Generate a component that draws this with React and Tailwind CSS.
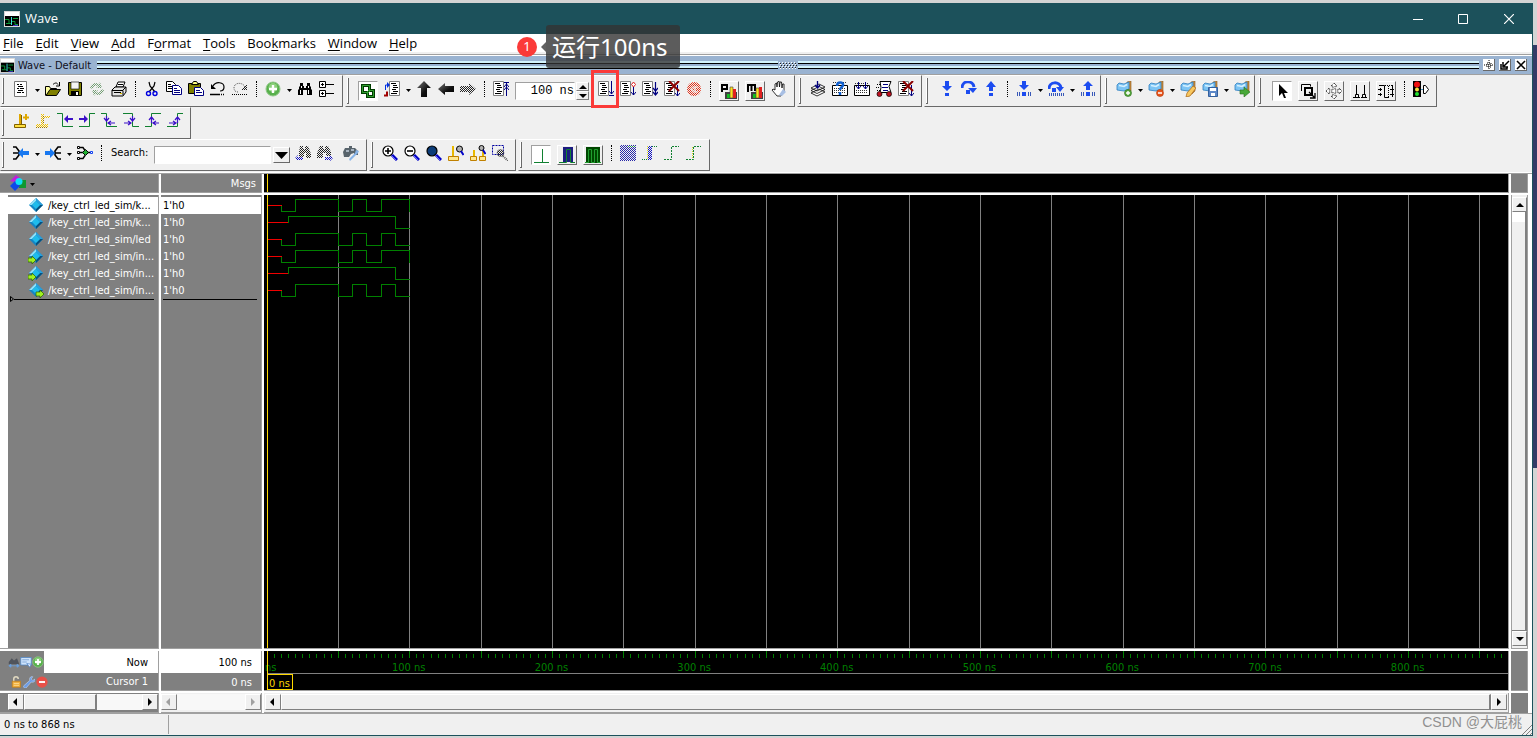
import { useState } from "react";
import clsx from "clsx";

const page = (
  <>
    <path d="M1.5 .5h12v15h-12z" fill="#fff" stroke="#777" />
    <path d="M4 3.5h2M7 3.5h2M5 5.5h5M4 7.5h2M7 7.5h4M5 9.5h5M4 11.5h4M9 11.5h2" stroke="#000" />
  </>
);

const doc = (
  <>
    <path d="M.5 .5h10v14H.5z" fill="#fff" stroke="#808080" />
    <path d="M2 2.5h5M4 4.5h4M4 6.5h5M3 8.5h4M4 10.5h5M2 12.5h6" stroke="#000" />
  </>
);

const lens = (fill) => (
  <>
    <circle cx="6" cy="6" r="5" fill={fill} stroke="#000" strokeWidth="1.2" />
    <path d="M10 10l5 5" stroke="#0000c8" strokeWidth="3" />
    <path d="M10 11l4 4" stroke="#6a6aff" />
  </>
);

const flag = (
  <>
    <path d="M11 1l4-1v10l-3 3h-2z" fill="#c98a3c" stroke="#8a5a20" strokeWidth=".6" />
    <path d="M1 4l2-2 5 1 5-2v7l-5 2-7-1z" fill="#7cc4f4" stroke="#2f7fc0" strokeWidth=".8" />
    <path d="M3 4.5l5 1 3-2" stroke="#d4f0ff" strokeWidth="1.6" fill="none" />
  </>
);

const diamond = (
  <>
    <path d="M8 1l7 7-7 7-7-7z" fill="#1585c4" />
    <path d="M8 1v3L4 8H1z" fill="#8fe0f7" />
    <path d="M8 1v3l4 4h3z" fill="#2aa0dc" />
    <path d="M15 8h-3l-4 4v3z" fill="#06517e" />
    <path d="M8 4l4 4-4 4-4-4z" fill="#1fbcec" />
  </>
);

const icons = {
  wave: (
    <>
      <path d="M0 0h16v16H0z" fill="#d8d8d8" />
      <path d="M1 1h14v4H1z" fill="#fff" />
      <path d="M1 5h14v10H1z" fill="#000" />
      <path d="M1 8.5h4v4h2M9 7.5h5M8 10.5h3v3h3M2 12.5h3" stroke="#0c9a3c" fill="none" />
      <path d="M7.5 6v8" stroke="#3ce0e0" />
      <path d="M9 14.5h5" stroke="#3a30c0" />
    </>
  ),
  page,
  open: (
    <>
      <path d="M.5 14.5v-9h4l1 2h6v2" fill="#ffffa0" stroke="#000" />
      <path d="M1 14.5l4-6h10.5l-4 6z" fill="#808000" stroke="#000" />
      <path d="M8 3.5c2-2 4-2 5 0M14.5 1v4H11" fill="none" stroke="#000" />
    </>
  ),
  save: (
    <>
      <path d="M1.5 1.5h13v13h-12l-1-1z" fill="#808000" stroke="#000" />
      <path d="M4 1h8v7H4z" fill="#f4f4f4" stroke="#000" strokeWidth=".6" />
      <path d="M4 10h8v4H4z" fill="#000" />
      <path d="M9 11h2v3H9z" fill="#fff" />
    </>
  ),
  reload: (
    <>
      <path d="M1 7c1-5 6-6 9-4l1-2 2 6H7l2-2C6 4 4 5 4 8z" fill="#709c70" />
      <path d="M15 9c-1 5-6 6-9 4l-1 2-2-6h6l-2 2c3 1 5 0 5-3z" fill="#709c70" />
      <path d="M0 0h16v16H0z" fill="url(#ditherBg)" />
    </>
  ),
  print: (
    <>
      <path d="M5 6l2-5h7l-2 5z" fill="#fff" stroke="#000" />
      <path d="M1 9l3-3h11v5l-3 4H1z" fill="#e4e4e4" stroke="#000" />
      <path d="M1 9.5h11V14M3 11.5h7M12 9l3-3M7 3.5h5" stroke="#000" fill="none" />
      <path d="M9 12h2v1H9z" fill="#e0c000" />
    </>
  ),
  cut: (
    <>
      <path d="M5 1l1 4 5 6M11 1l-1 4-5 6" stroke="#000" fill="none" strokeWidth="1.2" />
      <circle cx="4.5" cy="12.5" r="2" fill="none" stroke="#0000e0" strokeWidth="1.4" />
      <circle cx="11" cy="12.5" r="2" fill="none" stroke="#0000e0" strokeWidth="1.4" />
    </>
  ),
  copy: (
    <>
      <path d="M.5 .5h6l3 3v7h-9z" fill="#fff" stroke="#000" />
      <path d="M2 3.5h3M2 5.5h5M2 7.5h4" stroke="#000" />
      <path d="M6.5 4.5h6l3 3v6h-9z" fill="#fff" stroke="#000080" />
      <path d="M8 7.5h3M8 9.5h6M8 11.5h6" stroke="#000080" />
    </>
  ),
  paste: (
    <>
      <path d="M.5 2.5h12v10H.5z" fill="#808000" stroke="#000" />
      <path d="M3.5 3.5l2-3h3l2 3z" fill="#ffff80" stroke="#000" />
      <path d="M6.5 6.5h6l3 3v5h-9z" fill="#fff" stroke="#000080" />
      <path d="M8 9.5h4M8 11.5h6" stroke="#000080" />
    </>
  ),
  undo: (
    <>
      <path d="M3 5c3-5 11-4 11 1 0 3-2 4-4 4" fill="none" stroke="#000" strokeWidth="1.2" />
      <path d="M1 3v5h5z" fill="#000" />
      <path d="M0 13.5h10M11 13.5h1M13 13.5h1" stroke="#000" strokeWidth="1.5" />
    </>
  ),
  redo: (
    <>
      <path d="M13 6c-2-5-11-5-11 1 0 3 2 4 4 4" fill="none" stroke="#555" strokeDasharray="1 1" />
      <path d="M15 3v6H9z" fill="url(#ditherDark)" />
      <path d="M0 13.5h16" stroke="#000" strokeDasharray="1 1" />
    </>
  ),
  add: (
    <>
      <circle cx="8" cy="8" r="7" fill="#58b04c" stroke="#90c888" />
      <circle cx="8" cy="6.5" r="4.5" fill="#8cd07c" />
      <path d="M8 4v8M4 8h8" stroke="#fff" strokeWidth="2.4" />
    </>
  ),
  find: (
    <>
      <path d="M3 2h3v3h1v2h2V5h1V2h3v3l1 1v2l1 1v5h-5V9H6v5H1V9l1-1V6l1-1z" fill="#000" />
      <path d="M4.5 5v2M3.5 9v4M11.5 9v4M11.5 5v2" stroke="#fff" />
    </>
  ),
  tree: (
    <>
      <path d="M.5 .5h6v6h-6zM.5 9.5h6v6h-6z" fill="#fff" stroke="#000" />
      <path d="M7 3.5h8M7 12.5h8M2 3.5h3M2 12.5h3M3.5 2v3M3.5 11v3" stroke="#000" />
    </>
  ),
  link: (
    <>
      <path d="M2.5 2.5h7v7h-7zM7.5 7.5h6v6h-6z" fill="none" stroke="#003c00" strokeWidth="3" />
      <path d="M2.5 2.5h7v7h-7zM7.5 7.5h6v6h-6z" fill="none" stroke="#30a030" />
      <path d="M4 4h4v4H4zM9 9h3v3H9z" fill="#fff" />
    </>
  ),
  goto: (
    <>
      <g transform="translate(5 0)">{doc}</g>
      <path d="M0 14.5h3v-4" stroke="#a00000" strokeWidth="2" fill="none" />
      <path d="M1.5 9V4h3" stroke="#0030e0" fill="none" />
      <path d="M3 1l3 3-3 3z" fill="#0030e0" />
    </>
  ),
  up: <path d="M8 0l7 7h-4v9H5V7H1z" fill="url(#metal)" />,
  left: <path d="M0 8l7-6v3h9v6H7v3z" fill="url(#metal)" />,
  right: <path d="M16 8L9 2v3H0v6h9v3z" fill="url(#ditherDark)" />,
  restart: (
    <>
      {doc}
      <path d="M13.5 1v14M11 1.5h5M11 6l2.5-3L16 6M11 9l2.5-3L16 9" stroke="#000080" fill="none" />
    </>
  ),
  run: (
    <>
      {doc}
      <path d="M13.5 0v13M11 14.5h5M11 10l2.5 3 2.5-3" stroke="#000080" fill="none" />
    </>
  ),
  runCont: (
    <>
      {doc}
      <path d="M13.5 6v8M11 11l2.5 3 2.5-3" stroke="#000080" fill="none" />
      <path d="M13.5 1l2 2.5-2 2.5-2-2.5z" fill="#fff" stroke="#e02020" />
    </>
  ),
  runAll: (
    <>
      {doc}
      <path d="M13.5 1v13M11 7l2.5 3L16 7M11 11l2.5 3 2.5-3" stroke="#000080" fill="none" strokeWidth="1.2" />
    </>
  ),
  brk: (
    <>
      {doc}
      <path d="M13.5 4v11M11 12l2.5 3 2.5-3" stroke="#000080" fill="none" />
      <path d="M5 0l10 10M15 0L5 10" stroke="#8b0000" strokeWidth="2" />
    </>
  ),
  stop: (
    <>
      <circle cx="8" cy="8" r="7" fill="#e03018" />
      <path d="M12 6H7L5 8l2 3h5M9 6v5" stroke="#f0f0f0" fill="none" strokeWidth="1.2" />
      <path d="M0 0h16v16H0z" fill="url(#ditherBg)" />
    </>
  ),
  perf: (
    <>
      <path d="M1 9V2h5v4H1" fill="none" stroke="#000" strokeWidth="2" />
      <path d="M4 9h12v7H4z" fill="#404040" />
      <path d="M6 11h3v4H6z" fill="#10c020" />
      <path d="M9 4h3v11H9z" fill="#ffe020" stroke="#404040" strokeWidth=".6" />
      <path d="M12 6h3v9h-3z" fill="#e02020" />
    </>
  ),
  mem: (
    <>
      <path d="M1 9V2h7v6M4.5 2v6" fill="none" stroke="#000" strokeWidth="2" />
      <path d="M4 9h12v7H4z" fill="#404040" />
      <path d="M6 11h3v4H6z" fill="#10c020" />
      <path d="M9 5h3v10H9z" fill="#ffe020" stroke="#404040" strokeWidth=".6" />
      <path d="M12 4h3v11h-3z" fill="#e02020" />
    </>
  ),
  hand: (
    <>
      <path d="M4 9V3l1.5-1L6 6l.5-5L8 0l.5 6L9 1l1.5 0L11 7l.5-4L13 3v7l-3 5H6L1 9l1-1z" fill="#fff" stroke="#000" strokeWidth=".8" />
      <path d="M12 8l3 3-4 4-3-1z" fill="#a8bfe4" />
    </>
  ),
  compile: (
    <>
      <path d="M1 12l8-4 6 3-8 4zM1 9.5l8-4 6 3-8 4zM1 7l8-4 6 3-8 4z" fill="#fff" stroke="#000" strokeWidth=".8" />
      <path d="M7.5 0v6M5 4l2.5 3L10 4" stroke="#000080" strokeWidth="1.3" fill="none" />
    </>
  ),
  compileAsk: (
    <>
      <path d="M.5 4.5h15v10H.5z" fill="#fff" stroke="#000" />
      <path d="M1 1.5h14M2 7.5h12M2 9.5h12M2 11.5h12" stroke="#333" strokeDasharray="1 1" />
      <path d="M5 5c0-5 7-4 6-1 0 2-3 2-3 5M8 11v3" stroke="#1060d0" strokeWidth="2.5" fill="none" />
    </>
  ),
  compileAll: (
    <>
      <path d="M.5 4.5h15v10H.5z" fill="#fff" stroke="#000" />
      <path d="M1 2.5h14M2 9.5h12M2 11.5h12" stroke="#333" strokeDasharray="1 1" />
      <path d="M4.5 1v7M11.5 1v7M2 5l2.5 3L7 5M9 5l2.5 3L14 5" stroke="#000080" fill="none" />
    </>
  ),
  simulate: (
    <>
      <path d="M4 .5h11l-2 5 2 6H4l1-5z" fill="#fff" stroke="#000" />
      <path d="M1 3.5h3M0 6.5h4M1 9.5h3" stroke="#000" strokeDasharray="1 1" />
      <path d="M7 3.5h5M6 6.5h6M7 9.5h5" stroke="#000080" />
      <circle cx="3.5" cy="13" r="2.5" fill="#c01020" stroke="#000" strokeWidth=".7" />
      <circle cx="13" cy="13" r="2.5" fill="#c01020" stroke="#000" strokeWidth=".7" />
    </>
  ),
  stepIn: <path d="M6 0h4v5h3l-5 5-5-5h3zM6 12h4v3H6z" fill="#1c4cf0" />,
  stepOver: (
    <>
      <path d="M1 7c0-8 11-8 12-1" fill="none" stroke="#1c4cf0" strokeWidth="3" />
      <path d="M7 7h9l-4 5zM5 9h4v4H5z" fill="#1c4cf0" />
    </>
  ),
  stepOut: <path d="M8 0l5 6h-3v4H6V6H3zM6 12h4v3H6z" fill="#1c4cf0" />,
  stepInAll: (
    <>
      <path d="M6 0h4v4h3L8 9 3 4h3zM6 11h4v4H6z" fill="#1c4cf0" />
      <path d="M1.5 11v4M3.5 11v4M12.5 11v4M14.5 11v4" stroke="#3858b8" />
    </>
  ),
  stepOverAll: (
    <>
      <path d="M1 8c0-8 11-8 12-1" fill="none" stroke="#1c4cf0" strokeWidth="3" />
      <path d="M8 6h8l-4 5zM4 7h4v4H4z" fill="#1c4cf0" />
      <path d="M1 13.5h15" stroke="#3858b8" strokeWidth="3" strokeDasharray="1 1" />
    </>
  ),
  stepOutAll: (
    <>
      <path d="M8 0l5 5h-3v4H6V5H3zM6 11h4v4H6z" fill="#1c4cf0" />
      <path d="M1.5 11v4M3.5 11v4M12.5 11v4M14.5 11v4" stroke="#3858b8" />
    </>
  ),
  flagAdd: (
    <>
      {flag}
      <circle cx="12" cy="12" r="3.5" fill="#58a83c" stroke="#2a7020" strokeWidth=".6" />
      <path d="M12 10v4M10 12h4" stroke="#fff" strokeWidth="1.4" />
    </>
  ),
  flagDel: (
    <>
      {flag}
      <circle cx="12" cy="12" r="3.5" fill="#e8541c" stroke="#b03808" strokeWidth=".6" />
      <path d="M10 12h4" stroke="#fff" strokeWidth="1.5" />
    </>
  ),
  flagEdit: (
    <>
      {flag}
      <path d="M13 5l3 2-6 8-4 1 1-4z" fill="#f8c860" stroke="#b07020" strokeWidth=".8" />
    </>
  ),
  flagSave: (
    <>
      {flag}
      <path d="M6.5 6.5h9v9h-9z" fill="#5c88c8" stroke="#34609c" />
      <path d="M8 7h6v3H8zM9 12h4v3H9z" fill="#fff" />
    </>
  ),
  flagGo: (
    <>
      {flag}
      <path d="M6 9h4V6l6 5-6 5v-3H6z" fill="#48a838" stroke="#2a7020" strokeWidth=".6" />
    </>
  ),
  cursor: <path d="M5 1v12l3-3 2 5h2l-2-5h4z" fill="#000" />,
  zoomBox: (
    <>
      <path d="M1.5 8V1.5h9v2" stroke="#000" fill="none" />
      <path d="M5 5h7v7H5z" fill="none" stroke="#000" strokeWidth="2" />
      <path d="M9 9l6 6M15 10v5h-5" stroke="#000" fill="none" strokeWidth="1.3" />
    </>
  ),
  pan: <path d="M8 0l3 3H9v4h4V5l3 3-3 3V9H9v4h2l-3 3-3-3h2V9H3v2L0 8l3-3v2h4V3H5z" fill="#fff" stroke="#000" strokeDasharray="1 1" />,
  cursors: <path d="M4.5 2v9M3.5 11.5h3v3h-3zM1 14.5h7M12.5 2v9M10.5 11.5h3v3h-3zM9 14.5h6" stroke="#000" fill="none" />,
  edit: (
    <>
      <path d="M1 2.5h5.5v12H11M14.5 2v12" stroke="#000" fill="none" />
      <path d="M7 2.5h8M10.5 3v11" stroke="#000" strokeDasharray="1 1" />
      <path d="M0 6.5h4M2.5 5v3M0 11.5h4M2.5 10v3M12 6.5h4M12 11.5h4" stroke="#000" />
    </>
  ),
  light: (
    <>
      <path d="M0 0h8v16H0z" fill="#000" />
      <circle cx="4" cy="3.5" r="3" fill="#f01010" />
      <circle cx="4" cy="8.5" r="2" fill="#f8e040" />
      <circle cx="4" cy="13" r="2" fill="#20e030" />
      <path d="M10.5 4.5h2l3 4-3 4h-2z" fill="#fff" stroke="#000" />
      <path d="M8 8.5h2" stroke="#4090c0" />
    </>
  ),
  cursorAdd: (
    <>
      <path d="M1.5 11.5h11v3h-11z" fill="#ffe040" stroke="#806000" />
      <path d="M7 1v10M10 4.5h6M13 1v6" stroke="#e0a800" strokeWidth="2" />
      <path d="M8.5 2v9" stroke="#806000" />
    </>
  ),
  cursorDel: (
    <>
      <path d="M1 11h12v4H1zM6 1h3v10H6zM9 3h6v2H9z" fill="#f0c000" />
      <path d="M1 14.5h12M8.5 2v9" stroke="#a07800" />
      <path d="M0 0h16v16H0z" fill="url(#ditherBg)" />
    </>
  ),
  prevEdge: (
    <>
      <path d="M0 .5h5.5v13H16" stroke="#108030" fill="none" />
      <path d="M8 6h8" stroke="#3c10c8" strokeWidth="2" />
      <path d="M11 2v8L7 6z" fill="#3c10c8" />
    </>
  ),
  nextEdge: (
    <>
      <path d="M0 13.5h10.5V.5H16" stroke="#108030" fill="none" />
      <path d="M0 6h8" stroke="#3c10c8" strokeWidth="2" />
      <path d="M5 2v8l4-4z" fill="#3c10c8" />
    </>
  ),
  prevFall: (
    <>
      <path d="M0 .5h5.5v13H16" stroke="#108030" fill="none" />
      <path d="M5.5 3v6M3 5l2.5 3L8 5M7 10h7M10 8l-3 2 3 2" stroke="#3c10c8" fill="none" strokeWidth="1.2" />
    </>
  ),
  nextFall: (
    <>
      <path d="M0 .5h9.5v13H16" stroke="#108030" fill="none" />
      <path d="M9.5 3v6M7 5l2.5 3L12 5M1 10h7M5 8l3 2-3 2" stroke="#3c10c8" fill="none" strokeWidth="1.2" />
    </>
  ),
  prevRise: (
    <>
      <path d="M0 13.5h6.5V.5H16" stroke="#108030" fill="none" />
      <path d="M6.5 4v6M4 7l2.5-3L9 7M8 10h6M11 8l-3 2 3 2" stroke="#3c10c8" fill="none" strokeWidth="1.2" />
    </>
  ),
  nextRise: (
    <>
      <path d="M0 13.5h10.5V.5H16" stroke="#108030" fill="none" />
      <path d="M10.5 4v6M8 7l2.5-3L13 7M2 10h7M6 8l3 2-3 2" stroke="#3c10c8" fill="none" strokeWidth="1.2" />
    </>
  ),
  driver: (
    <>
      <path d="M0 2h3l3 4v4l-3 4H0M0 8h8" stroke="#000" strokeWidth="1.6" fill="none" />
      <path d="M5 8l5-5v3h6v4h-6v3z" fill="#1878f0" />
    </>
  ),
  reader: (
    <>
      <path d="M16 2h-3l-3 4v4l3 4h3M10 8h6" stroke="#000" strokeWidth="1.6" fill="none" />
      <path d="M10 8L5 3v3H0v4h5v3z" fill="#1878f0" />
    </>
  ),
  trace: (
    <>
      <path d="M3 2.5h3l2 3M3 7.5h10M3 13.5h3l2-3" stroke="#000" fill="none" strokeWidth="1.4" />
      <path d="M.5 1.5h2v2h-2zM.5 6.5h2v2h-2zM.5 12.5h2v2h-2z" fill="#fff" stroke="#000" />
      <path d="M8.5 4.5l3 3-3 3-3-3z" fill="#20b030" stroke="#000" />
      <path d="M13.5 6.5h2v2h-2z" fill="#fff" stroke="#1040f0" />
    </>
  ),
  searchPrev: (
    <>
      <path d="M5 1h3v3h2V1h3l3 8v4h-5V8H9v4H4V7z" fill="url(#ditherDark)" />
      <path d="M0 13l3-3v2h5v3H3v1z" fill="url(#ditherBlue)" />
    </>
  ),
  searchNext: (
    <>
      <path d="M3 1h3v3h2V1h3l3 6v4H9V8H6v5H0V8z" fill="url(#ditherDark)" />
      <path d="M16 13l-3-3v2H8v3h5v1z" fill="url(#ditherBlue)" />
    </>
  ),
  searchOpt: (
    <>
      <path d="M2 3h4V1h3v2h3l3 3v4h-4V8l-3 1-2 3H1L0 7z" fill="#58646c" />
      <path d="M3 6h3M8 5h3" stroke="#a8b4c0" strokeWidth="2" />
      <path d="M6 14l6-6 1-3 3 1-1 2-2 2-6 6z" fill="#88b4e8" />
    </>
  ),
  zoomIn: (
    <>
      {lens("#fff")}
      <path d="M6 3v6M3 6h6" stroke="#000" strokeWidth="1.6" />
    </>
  ),
  zoomOut: (
    <>
      {lens("#fff")}
      <path d="M3 6h6" stroke="#000" strokeWidth="1.6" />
    </>
  ),
  zoomFull: lens("#0c3c78"),
  zoomCursor: (
    <>
      <path d="M.5 11.5h10v4H.5z" fill="#ffe890" stroke="#c08000" />
      <path d="M5 1v10" stroke="#e8b800" strokeWidth="2" />
      <circle cx="11.5" cy="4" r="3" fill="#b0b0b0" stroke="#000" />
      <path d="M13 6l2.5 4" stroke="#0000c8" strokeWidth="2" />
    </>
  ),
  zoomCursors: (
    <>
      <path d="M.5 11.5h6v4h-6zM9.5 11.5h6v4h-6z" fill="#ffe890" stroke="#c08000" />
      <path d="M4 5v6M13 5v6" stroke="#e8b800" strokeWidth="2" />
      <circle cx="11.5" cy="3" r="2.5" fill="#b0b0b0" stroke="#000" />
      <path d="M13 5l2.5 4" stroke="#0000c8" strokeWidth="2" />
    </>
  ),
  zoomArea: (
    <>
      <path d="M.5 .5h11v9H.5z" fill="none" stroke="#0000a0" strokeDasharray="2 1" />
      <circle cx="8.5" cy="8" r="3.5" fill="url(#ditherDark)" stroke="#666" strokeWidth=".6" />
      <path d="M11 11l5 5" stroke="#555" strokeWidth="2" strokeDasharray="1 1" />
    </>
  ),
  lineMode: <path d="M1 15.5h15M9.5 2v13" stroke="#108030" />,
  barMode: (
    <>
      <path d="M4 0h10v15H4z" fill="#1c1c80" />
      <path d="M0 15.5h7.5v-13h4v13H16" fill="none" stroke="#108030" />
    </>
  ),
  fillMode: (
    <>
      <path d="M1 0h14v16H1z" fill="#004800" />
      <path d="M0 15.5h3.5v-13h3v13h3v-13h3v13H16" fill="none" stroke="#20a030" />
    </>
  ),
  expand1: (
    <>
      <path d="M0 0h16v16H0z" fill="#2828a8" />
      <path d="M0 0h16v16H0z" fill="url(#ditherBg)" />
      <path d="M8 1.5h8" stroke="#20a030" strokeDasharray="1 1" />
    </>
  ),
  expand2: (
    <>
      <path d="M0 14.5h5M10 1.5h6" stroke="#108030" strokeDasharray="1 1" />
      <path d="M5 1h5v14H5z" fill="url(#ditherBlue)" />
      <path d="M5.5 1v14" stroke="#d8d820" strokeDasharray="1 1" />
    </>
  ),
  expand3: <path d="M0 14.5h7.5V1.5H15" fill="none" stroke="#108030" strokeDasharray="2 1" />,
  expand4: (
    <>
      <path d="M0 14.5h7.5V1.5H15" fill="none" stroke="#108030" strokeDasharray="2 1" />
      <path d="M6.5 2v12" stroke="#d8d820" strokeDasharray="1 1" />
    </>
  ),
  colors: (
    <>
      <path d="M6 0l5 4-7 3-4-1z" fill="#c020d8" />
      <path d="M9 5h7v8H9z" fill="#109830" />
      <path d="M5 6l5 5-5 5-5-5z" fill="#1048e8" />
      <circle cx="9" cy="6.5" r="3.5" fill="#10e0f8" />
    </>
  ),
  sig: diamond,
  sigIn: (
    <>
      {diamond}
      <path d="M0 10h4V8l4 4-4 4v-2H0z" fill="#a0f020" stroke="#286000" strokeWidth=".7" />
    </>
  ),
  sigOut: (
    <>
      {diamond}
      <path d="M8 10h4V8l4 4-4 4v-2H8z" fill="#a0f020" stroke="#286000" strokeWidth=".7" />
    </>
  ),
  snap: (
    <>
      <path d="M1 11V8l4-5 3 3 4-3 3 8z" fill="#50545c" />
      <path d="M1 13l3-2v4zM15 13l-3-2v4zM3 13h10" fill="#6aa0e0" stroke="#6aa0e0" />
    </>
  ),
  note: (
    <>
      <path d="M1 2h14v10H1z" fill="#cfe4fb" stroke="#4f86c8" />
      <path d="M3 5h9M3 8h6" stroke="#6c98d0" />
      <path d="M9 10l4 5 2-4z" fill="#e8f0ff" stroke="#4f86c8" />
    </>
  ),
  lock: (
    <>
      <path d="M5 8V4c0-4 6-4 6 0" fill="none" stroke="#e0d8c0" strokeWidth="2" />
      <path d="M3 7h11v8H3z" fill="#f0b040" stroke="#c07c18" />
      <path d="M5 10h7M5 12.5h7" stroke="#ffe09c" />
    </>
  ),
  wrench: <path d="M1 13l8-7c-1-4 2-6 4-5l-2 3 2 2 3-2c1 3-2 5-5 4l-7 8c-2 1-4-1-3-3z" fill="#6c9ce4" stroke="#d0e0f8" strokeWidth=".7" />,
  remove: (
    <>
      <circle cx="8" cy="8" r="7.5" fill="#e85048" />
      <path d="M4 8h8" stroke="#fff" strokeWidth="2.5" />
    </>
  ),
};

const signals = [
  { name: "/key_ctrl_led_sim/k...", icon: "sig", shape: "full" },
  { name: "/key_ctrl_led_sim/k...", icon: "sig", shape: "slow" },
  { name: "/key_ctrl_led_sim/led", icon: "sig", shape: "drop" },
  { name: "/key_ctrl_led_sim/in...", icon: "sigIn", shape: "full" },
  { name: "/key_ctrl_led_sim/in...", icon: "sigIn", shape: "slow" },
  { name: "/key_ctrl_led_sim/in...", icon: "sigOut", shape: "drop" },
];

// x is measured from the 0 ns cursor, y from the top of the signal's row
const shapes = {
  full: { red: 14, d: "M14 6v6h14V0h43v12h14V0h14v12h15V0h28v12" },
  drop: { red: 14, d: "M14 6v6h14V0h43v12h14V0h14v12h15V0h14v12h14" },
  slow: { red: 21, d: "M21 6V0h107v12h14" },
};

const PX_PER_50NS = 71.35;

const menus = [
  ["", "F", "ile"],
  ["", "E", "dit"],
  ["", "V", "iew"],
  ["", "A", "dd"],
  ["F", "o", "rmat"],
  ["", "T", "ools"],
  ["Boo", "k", "marks"],
  ["", "W", "indow"],
  ["", "H", "elp"],
];

function Icon({ name, size = "size-4" }) {
  return (
    <svg viewBox="0 0 16 16" className={clsx("shrink-0", size)} aria-hidden="true">
      {icons[name]}
    </svg>
  );
}

function Tool({ icon, label, children }) {
  return (
    <button type="button" aria-label={label || icon} className="relative flex h-6 w-[22px] shrink-0 items-center justify-center">
      <Icon name={icon} />
      {children}
    </button>
  );
}

function Raised({ icon, on }) {
  return (
    <button
      type="button"
      aria-label={icon}
      aria-pressed={!!on}
      className={clsx(
        "mx-[3px] mt-1 flex size-5 shrink-0 items-center justify-center border",
        on
          ? "border-t-[#a0a0a0] border-l-[#a0a0a0] border-r-white border-b-white bg-white"
          : "border-t-white border-l-white border-r-[#696969] border-b-[#696969] bg-[#f0f0f0]"
      )}
    >
      <Icon name={icon} />
    </button>
  );
}

function More() {
  return (
    <button type="button" aria-label="More" className="flex h-6 w-[10px] shrink-0 items-center justify-center pt-[3px]">
      <svg viewBox="0 0 5 3" className="h-[3px] w-[5px]"><path d="M0 0h5L2.5 3z" /></svg>
    </button>
  );
}

function Sep() {
  return (
    <div className="flex w-[11px] shrink-0 justify-center">
      <div className="h-4 border-l border-dotted border-black" />
    </div>
  );
}

function Group({ children, className }) {
  return (
    <div className={clsx("flex h-8 shrink-0 items-center border border-t-white border-l-transparent border-r-[#696969] border-b-[#696969] pb-1", className)}>
      <div className="mt-[3px] ml-px h-[26px] w-[2px] shrink-0 border-r border-b border-[#696969] bg-white" />
      {children}
    </div>
  );
}

function Tri({ dir, off }) {
  const d = { left: "M5 0v8L1 4z", right: "M2 0v8l4-4z", up: "M0 6h8L4 2z", down: "M0 2h8L4 6z" }[dir];
  return (
    <svg viewBox="0 0 8 8" className="size-2"><path d={d} fill={off ? "#a0a0a0" : "#000"} /></svg>
  );
}

function Arrow({ dir, off, className }) {
  return (
    <button
      type="button"
      aria-label={"Scroll " + dir}
      disabled={off}
      className={clsx("flex shrink-0 items-center justify-center border border-t-white border-l-white border-r-[#808080] border-b-[#808080] bg-[#f0f0f0]", className)}
    >
      <Tri dir={dir} off={off} />
    </button>
  );
}

function HScroll({ off, thumb }) {
  return (
    <div className="mt-px flex h-4 w-full items-stretch bg-[#f8f8f8]">
      <Arrow dir="left" off={off} className="w-4" />
      {thumb && <div className={clsx("border border-r-2 border-t-white border-l-white border-r-[#808080] border-b-[#808080] bg-[#f0f0f0]", thumb)} />}
      {thumb !== "flex-1" && <div className="flex-1" />}
      <Arrow dir="right" off={off} className="w-4" />
    </div>
  );
}

function Defs() {
  return (
    <svg className="absolute size-0" aria-hidden="true">
      <defs>
        <pattern id="ditherBg" width="2" height="2" patternUnits="userSpaceOnUse">
          <path d="M0 0h1v1H0zM1 1h1v1H1z" fill="#f0f0f0" />
        </pattern>
        <pattern id="ditherDark" width="2" height="2" patternUnits="userSpaceOnUse">
          <path d="M0 0h1v1H0zM1 1h1v1H1z" fill="#222" />
        </pattern>
        <pattern id="ditherBlue" width="2" height="2" patternUnits="userSpaceOnUse">
          <path d="M0 0h1v1H0zM1 1h1v1H1z" fill="#1010c0" />
        </pattern>
        <linearGradient id="metal" x1="0" y1="0" x2="1" y2="1">
          <stop offset="0" stopColor="#777" />
          <stop offset=".6" stopColor="#111" />
          <stop offset="1" stopColor="#000" />
        </linearGradient>
      </defs>
    </svg>
  );
}

function TitleBar() {
  return (
    <div className="flex h-[31px] shrink-0 items-center bg-[#1c515b] pl-1 text-white">
      <Icon name="wave" />
      <span className="ml-[5px] flex-1 font-['Open_Sans',sans-serif] text-[13px]">Wave</span>
      <button type="button" aria-label="Minimize" className="flex w-[45px] justify-center">
        <svg viewBox="0 0 10 10" className="size-[10px]"><path d="M0 5.5h10" stroke="#fff" /></svg>
      </button>
      <button type="button" aria-label="Maximize" className="flex w-[45px] justify-center">
        <svg viewBox="0 0 10 10" className="size-[10px]"><path d="M.5 .5h9v9h-9z" stroke="#fff" fill="none" /></svg>
      </button>
      <button type="button" aria-label="Close" className="flex w-[47px] justify-center">
        <svg viewBox="0 0 10 10" className="size-[10px]"><path d="M0 0l10 10M10 0L0 10" stroke="#fff" strokeWidth="1.2" /></svg>
      </button>
    </div>
  );
}

function Rails() {
  return (
    <div className="flex flex-1 flex-col gap-[2px]">
      <div className="h-[3px] border-t-2 border-b border-t-[#d4f4fc] border-b-black" />
      <div className="h-[3px] border-t-2 border-b border-t-[#d4f4fc] border-b-black" />
    </div>
  );
}

function DockHeader() {
  const btn = "flex size-3 items-center justify-center border-r border-b border-[#696969] bg-white";
  return (
    <div className="flex h-5 shrink-0 items-center border-y border-t-white border-b-[#a0a0a0] bg-[#9ab3d1] pr-[5px]">
      <Icon name="wave" size="size-[15px]" />
      <span className="mr-[6px] ml-[3px] pt-[2px] text-[#101020]">Wave - Default</span>
      <Rails />
      <svg viewBox="0 0 18 8" className="mx-px h-2 w-[18px]">
        <path d="M0 1.5h18M1 3.5h17M0 5.5h18M1 7.5h17" stroke="#fff" strokeDasharray="1 2" />
        <path d="M1 2.5h17M2 4.5h16M1 6.5h17" stroke="#222" strokeDasharray="1 2" />
      </svg>
      <Rails />
      <div className="ml-1 flex gap-1">
        <button type="button" aria-label="Undock" className={btn}>
          <svg viewBox="0 0 10 10" className="size-[10px]"><path d="M5 0v10M0 5h10M3 3h4v4H3z" stroke="#000" strokeDasharray="1 1" fill="none" /></svg>
        </button>
        <button type="button" aria-label="Dock" className={btn}>
          <svg viewBox="0 0 10 10" className="size-[10px]"><path d="M9 1L4 6M3 2v5h5M1 4v5h6V7" stroke="#000" strokeWidth="1.5" fill="none" /></svg>
        </button>
        <button type="button" aria-label="Close pane" className={btn}>
          <svg viewBox="0 0 10 10" className="size-[10px]"><path d="M1 1l8 8M9 1L1 9" stroke="#000" strokeWidth="1.6" /></svg>
        </button>
      </div>
    </div>
  );
}

function Toolbars() {
  const [span, setSpan] = useState("100 ns");
  const [query, setQuery] = useState("");
  return (
    <div className="shrink-0 border-b border-white bg-[#f0f0f0] pb-px">
      <div className="flex gap-[2px]">
        <Group className="pr-1">
          <div className="w-[6px]" />
          <Tool icon="page" /><More /><Tool icon="open" /><Tool icon="save" /><Tool icon="reload" /><Tool icon="print" /><Sep />
          <Tool icon="cut" /><Tool icon="copy" /><Tool icon="paste" /><Tool icon="undo" /><Tool icon="redo" /><Sep />
          <Tool icon="add" /><More /><Tool icon="find" /><Tool icon="tree" />
        </Group>
        <Group className="pr-1">
          <div className="w-[6px]" />
          <Raised icon="link" on /><Tool icon="goto" /><More /><Tool icon="up" /><Tool icon="left" /><Tool icon="right" /><Sep />
          <Tool icon="restart" />
          <input
            aria-label="Run length"
            value={span}
            onChange={(e) => setSpan(e.target.value)}
            className="mt-1 ml-[3px] h-[18px] w-[60px] border border-t-[#a0a0a0] border-l-[#a0a0a0] border-r-white border-b-white bg-white text-right font-['Liberation_Mono',monospace] text-[12px]"
          />
          <div className="mt-1 mr-[6px] ml-px flex flex-col">
            <Arrow dir="up" className="h-[9px] w-[13px]" />
            <Arrow dir="down" className="h-[9px] w-[13px]" />
          </div>
          <Tool icon="run" label="Run">
            <span className="absolute -top-[7px] -left-1 z-10 h-[38px] w-7 border-[3px] border-[#fb3a38]" />
          </Tool>
          <Tool icon="runCont" /><Tool icon="runAll" /><Tool icon="brk" /><Tool icon="stop" /><Sep />
          <Raised icon="perf" /><Raised icon="mem" /><Tool icon="hand" />
        </Group>
        <Group className="pr-1">
          <div className="w-[6px]" />
          <Tool icon="compile" /><Tool icon="compileAsk" /><Tool icon="compileAll" /><Tool icon="simulate" /><Tool icon="brk" />
        </Group>
        <Group className="pr-px">
          <div className="w-[8px]" />
          <Tool icon="stepIn" /><Tool icon="stepOver" /><Tool icon="stepOut" /><Sep />
          <Tool icon="stepInAll" /><More /><Tool icon="stepOverAll" /><More /><Tool icon="stepOutAll" />
        </Group>
        <Group className="pr-px">
          <div className="w-[6px]" />
          <Tool icon="flagAdd" /><More /><Tool icon="flagDel" /><More /><Tool icon="flagEdit" /><Tool icon="flagSave" /><More /><Tool icon="flagGo" />
        </Group>
        <Group className="pr-1">
          <div className="w-[8px]" />
          <Raised icon="cursor" on /><Raised icon="zoomBox" /><Raised icon="pan" /><Raised icon="cursors" /><Raised icon="edit" /><Sep />
          <Tool icon="light" />
        </Group>
      </div>
      <div className="flex gap-[2px]">
        <Group className="pr-1">
          <div className="w-[6px]" />
          <Tool icon="cursorAdd" /><Tool icon="cursorDel" /><Tool icon="prevEdge" /><Tool icon="nextEdge" />
          <Tool icon="prevFall" /><Tool icon="nextFall" /><Tool icon="prevRise" /><Tool icon="nextRise" />
        </Group>
      </div>
      <div className="flex gap-[2px]">
        <Group className="pr-1">
          <div className="w-[6px]" />
          <Tool icon="driver" /><More /><Tool icon="reader" /><More /><Tool icon="trace" /><Sep />
          <label htmlFor="search" className="mr-[6px] ml-1 pt-px">Search:</label>
          <input
            id="search"
            value={query}
            onChange={(e) => setQuery(e.target.value)}
            className="mt-1 h-[18px] w-[117px] border border-t-[#a0a0a0] border-l-[#a0a0a0] border-r-white border-b-white bg-white px-1"
          />
          <button type="button" aria-label="Search history" className="mx-[2px] mt-1 flex h-4 w-[17px] items-center justify-center border border-t-white border-l-white border-r-[#696969] border-b-[#696969]">
            <svg viewBox="0 0 13 7" className="h-[7px] w-[13px]"><path d="M0 0h13L6.5 7z" /></svg>
          </button>
          <Tool icon="searchPrev" /><Tool icon="searchNext" />
          <div className="w-1" />
          <Tool icon="searchOpt" />
        </Group>
        <Group className="pr-1">
          <div className="w-[6px]" />
          <Tool icon="zoomIn" /><Tool icon="zoomOut" /><Tool icon="zoomFull" /><Tool icon="zoomCursor" /><Tool icon="zoomCursors" /><Tool icon="zoomArea" />
        </Group>
        <Group className="pr-1">
          <div className="w-[6px]" />
          <Raised icon="lineMode" on /><Raised icon="barMode" /><Raised icon="fillMode" /><Sep />
          <Tool icon="expand1" /><Tool icon="expand2" /><Tool icon="expand3" /><Tool icon="expand4" />
        </Group>
      </div>
    </div>
  );
}

function Plot() {
  return (
    <svg className="absolute inset-0 size-full" shapeRendering="crispEdges">
      {Array.from({ length: 60 }, (_, i) => (
        <path key={i} d={`M${Math.floor(3 + (i + 1) * PX_PER_50NS) + 0.5} 0v2000`} stroke="#808080" />
      ))}
      {signals.map((s, i) => (
        <g key={i} transform={`translate(3.5 ${i * 17 + 4.5})`} fill="none">
          <path d={`M0 6h${shapes[s.shape].red}`} stroke="#f00000" />
          <path d={shapes[s.shape].d} stroke="#008000" />
        </g>
      ))}
      <path d="M3.5 0v2000" stroke="#ffd800" />
    </svg>
  );
}

function Ruler() {
  return (
    <svg className="absolute inset-0 size-full" shapeRendering="crispEdges">
      {Array.from({ length: 173 }, (_, i) => {
        const x = Math.floor(3 + ((i + 1) * PX_PER_50NS) / 10) + 0.5;
        return <path key={i} d={`M${x} ${(i + 1) % 10 ? 3 : 0}V7`} stroke="#008000" />;
      })}
      <text x="1" y="20" fill="#008000">ns</text>
      {Array.from({ length: 8 }, (_, i) => (
        <text key={i} x={2 + (i + 1) * 2 * PX_PER_50NS} y="20" fill="#008000" textAnchor="middle">
          {(i + 1) * 100} ns
        </text>
      ))}
      <path d="M3 22.5h2000" stroke="#808080" />
      <path d="M3.5 0v23" stroke="#ffd800" />
      <path d="M3.5 23.5h25v15h-25z" stroke="#ffd800" fill="#000" />
      <text x="5" y="36" fill="#ffd800">0 ns</text>
    </svg>
  );
}

function WavePane() {
  const line = "border-r border-b border-[#a0a0a0]";
  return (
    <div className="grid min-h-0 flex-1 grid-cols-[159px_101px_1fr_17px] grid-rows-[19px_1fr_40px_20px] gap-[2px] border-t border-[#a0a0a0] bg-white pr-1">
      <div className={clsx(line, "flex items-center bg-[#808080] pl-[10px]")}>
        <Icon name="colors" />
        <div className="w-px" />
        <More />
      </div>
      <div className={clsx(line, "bg-[#808080] pr-[5px] text-right leading-5 text-white")}>Msgs</div>
      <div className={clsx(line, "bg-black")}><div className="ml-[3px] h-full w-px bg-[#ffd800]" /></div>
      <div className={clsx(line, "bg-[#808080]")} />

      <div className={clsx(line, "flex min-h-0 bg-[#808080]")}>
        <div className="w-2 shrink-0 bg-white" />
        <ul className="min-w-0 flex-1 pt-[2px]">
          {signals.map((s, i) => (
            <li key={i} className={clsx("flex h-[17px] items-start gap-1 pl-5 leading-[17px]", i === 0 ? "bg-white text-black" : "text-white")}>
              <Icon name={s.icon} />
              <span className="whitespace-nowrap">{s.name}</span>
            </li>
          ))}
          <li className="mr-1 ml-[2px] flex">
            <svg viewBox="0 0 4 6" className="-mt-[3px] h-[6px] w-1"><path d="M.5 .5v5l3-2.5z" fill="#808080" stroke="#000" /></svg>
            <span className="h-px flex-1 bg-black" />
          </li>
        </ul>
      </div>
      <ul className={clsx(line, "bg-[#808080] pt-[2px]")}>
        {signals.map((s, i) => (
          <li key={i} className={clsx("h-[17px] pl-[2px] leading-[17px]", i === 0 ? "bg-white text-black" : "text-white")}>1'h0</li>
        ))}
        <li className="mr-1 ml-[2px] h-px bg-black" />
      </ul>
      <div className={clsx(line, "relative min-h-0 overflow-hidden bg-black")}><Plot /></div>
      <div className={clsx(line, "flex min-h-0 flex-col border-l bg-[#f0f0f0] py-[2px]")}>
        <Arrow dir="up" className="h-[15px]" />
        <div className="h-[10px] border-r-2 border-[#808080] bg-white" />
        <div className="flex-1 border-r-2 border-b border-[#808080]" />
        <Arrow dir="down" className="h-[15px]" />
      </div>

      <div className={clsx(line, "flex flex-col bg-[#808080] text-right")}>
        <div className="flex h-[22px] items-center pl-2">
          <Icon name="snap" size="size-3" /><Icon name="note" size="size-3" /><Icon name="add" size="size-3" />
          <span className="h-full flex-1 bg-white pr-[10px] leading-6">Now</span>
        </div>
        <div className="flex h-[17px] items-center gap-px pl-[10px]">
          <Icon name="lock" size="size-3" /><Icon name="wrench" size="size-3" /><Icon name="remove" size="size-3" />
          <span className="flex-1 pr-[10px] leading-5 text-white">Cursor 1</span>
        </div>
      </div>
      <div className={clsx(line, "bg-[#808080] text-right")}>
        <div className="h-[22px] bg-white pr-[9px] leading-6">100 ns</div>
        <div className="h-[17px] pr-[9px] leading-5 text-white">0 ns</div>
      </div>
      <div className={clsx(line, "relative overflow-hidden bg-black")}><Ruler /></div>
      <div className={clsx(line, "bg-[#808080]")} />

      <div className={clsx(line, "bg-[#808080] pl-2")}><HScroll thumb="w-[73px]" /></div>
      <div className={clsx(line, "bg-[#f0f0f0]")}><HScroll off /></div>
      <div className={clsx(line, "bg-[#f0f0f0] px-px")}><HScroll thumb="flex-1" /></div>
      <div className="bg-[#808080]" />
    </div>
  );
}

export default function App() {
  return (
    <div className="relative flex h-screen min-h-80 flex-col overflow-hidden bg-[#d4d4d4] font-['DejaVu_Sans_Condensed','Noto_Sans_CJK_SC',sans-serif] text-[11px] text-black">
      <Defs />
      <div className="h-[3px] shrink-0" />
      <div className="flex min-h-0 flex-1">
        <div className="flex min-w-0 flex-1 flex-col overflow-hidden border-r border-b border-[#1c515b] bg-[#f0f0f0]">
          <TitleBar />
          <nav className="flex h-[18px] shrink-0 items-center gap-3 bg-white pt-[2px] pl-[3px] font-['Open_Sans',sans-serif] text-[13px]">
            {menus.map(([a, key, b]) => (
              <button type="button" key={a + key + b}>
                {a}<span className="underline underline-offset-2">{key}</span>{b}
              </button>
            ))}
          </nav>
          <div className="h-[3px] shrink-0 border-b border-[#a0a0a0]" />
          <DockHeader />
          <Toolbars />
          <WavePane />
          <footer className="flex h-[22px] shrink-0 items-center border-t border-[#a0a0a0] pl-1">
            <span className="w-[165px] shrink-0 border-r border-[#a0a0a0] leading-[19px]">0 ns to 868 ns</span>
            <span className="flex-1 self-start text-right font-['Liberation_Sans','Noto_Sans_CJK_SC',sans-serif] text-[14px] leading-4 text-[#909090]">CSDN @大屁桃</span>
            <svg viewBox="0 0 10 10" className="size-[10px] self-end"><path d="M0 10L10 0M4 10l6-6M8 10l2-2" stroke="#808080" /></svg>
          </footer>
        </div>
        <div className="flex w-1 shrink-0 flex-col">
          <div className="h-[42px] bg-[#d4d4d4]" />
          <div className="flex-1 bg-[#343b67]" />
          <div className="h-[268px] bg-[#d4d4d4]" />
        </div>
      </div>
      <div className="h-[2px] shrink-0" />

      {/* step marker pointing at the run button */}
      <div className="absolute top-[25px] left-[517px] flex items-center">
        <span className="flex size-5 items-center justify-center rounded-full bg-[#fb3a38] font-['Noto_Sans',sans-serif] text-[13px] text-white">1</span>
        <svg viewBox="0 0 5 10" className="ml-1 h-[10px] w-[5px]"><path d="M5 0v10L0 5z" fill="#3a3a3a" fillOpacity=".8" /></svg>
        <span className="h-[43px] rounded-[3px] bg-[#333]/80 pr-3 pl-[6px] font-['Noto_Sans','Noto_Sans_CJK_SC',sans-serif] text-[24px] leading-[43px] text-white">运行100ns</span>
      </div>
    </div>
  );
}
